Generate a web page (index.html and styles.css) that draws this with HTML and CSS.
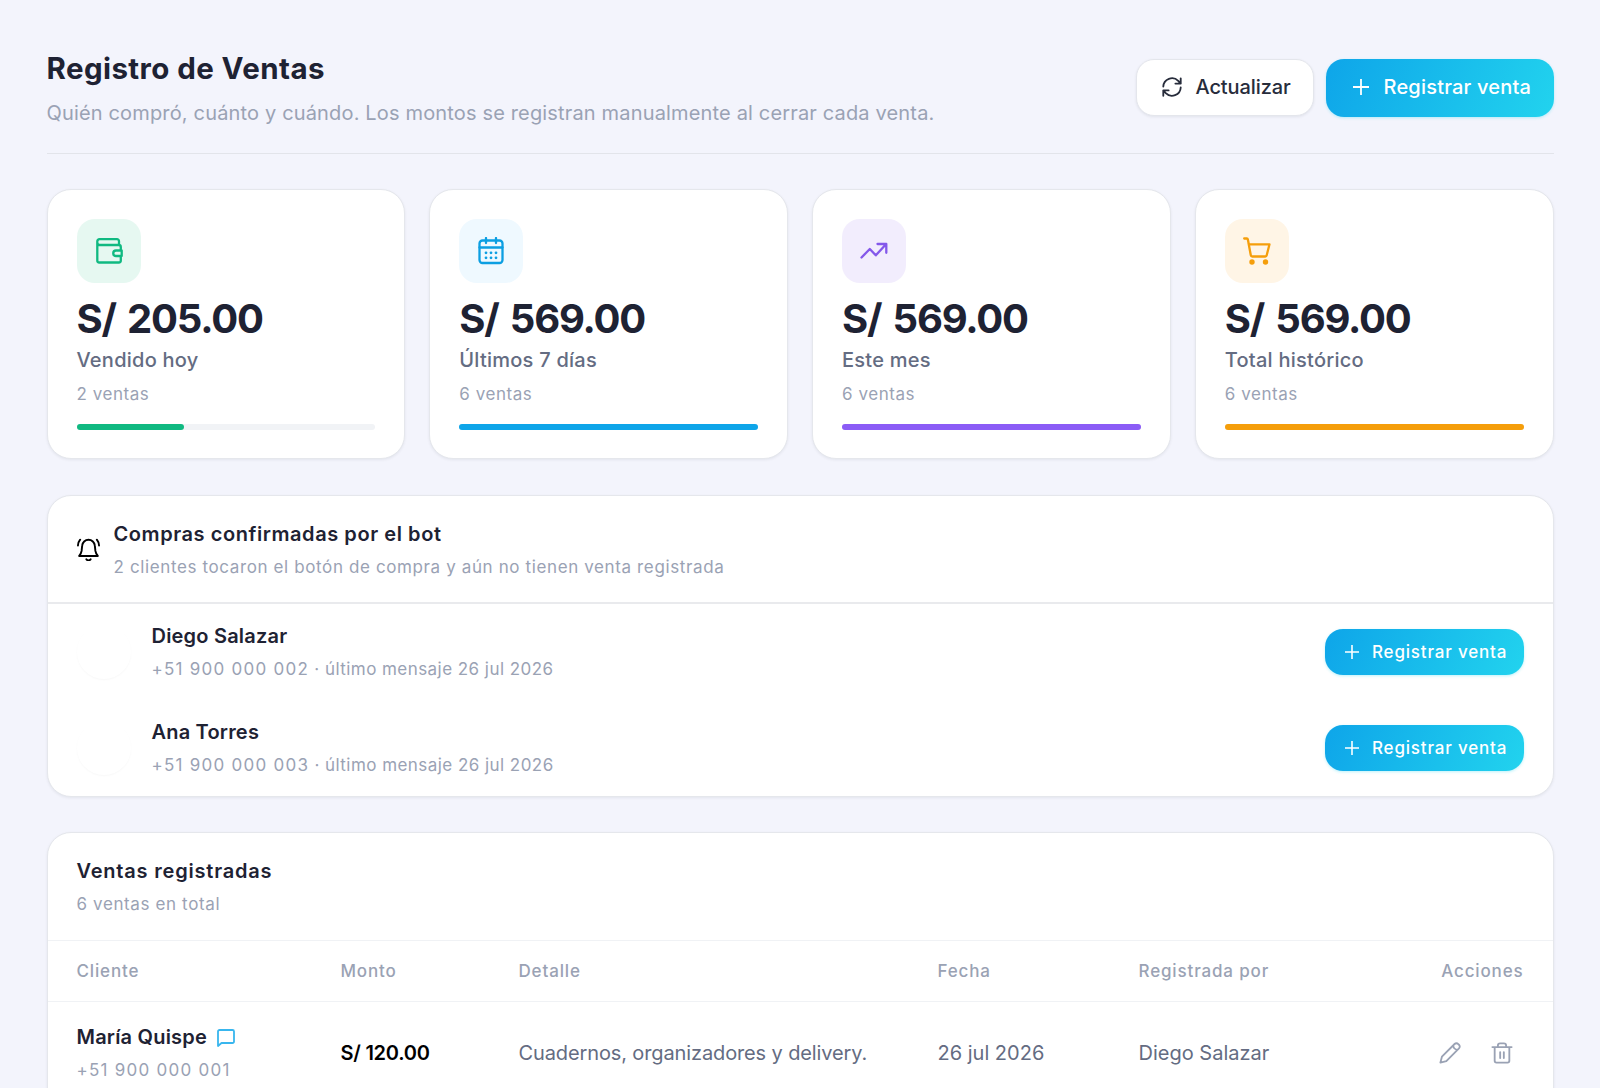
FILE: index.html
```html
<!DOCTYPE html>
<html lang="es">
<head>
  <meta charset="UTF-8">
  <title>Registro de Ventas</title>
  <link rel="stylesheet" href="styles.css">
</head>
<body>
  <main class="page">
    <header class="page-header">
      <div>
        <h1 class="page-title">Registro de Ventas</h1>
        <p class="page-subtitle">Quién compró, cuánto y cuándo. Los montos se registran manualmente al cerrar cada venta.</p>
      </div>
      <div class="page-actions">
        <button class="btn btn-light">
          <svg class="icon-refresh" viewBox="0 0 24 24"><path d="M21.5 2.5v5.8h-5.8M2.5 21.5v-5.8h5.8M2.5 11.5A9.5 9.5 0 0 1 18.8 5.3l2.7 3M21.5 12.5A9.5 9.5 0 0 1 5.2 18.7l-2.7-3"/></svg>
          <span>Actualizar</span>
        </button>
        <button class="btn btn-primary">
          <svg class="icon-plus" viewBox="0 0 16 16"><path d="M8 0v16M0 8h16"/></svg>
          <span>Registrar venta</span>
        </button>
      </div>
    </header>

    <section class="stats">
      <article class="card stat green">
        <div class="stat-icon">
          <svg viewBox="0 0 28 28"><path d="M24 8V4.2a2 2 0 0 0-2-2H4.5a2.2 2.2 0 0 0-2.2 2.3v19a2 2 0 0 0 2 2h19.500a2 2 0 0 0 2-2v-4M2.300 5.500C2.300 7.200 3.300 8 4.800 8h19a2 2 0 0 1 2 2v3M21 13.500h5.700v5.500H21a2.750 2.750 0 0 1 0-5.500z"/></svg>
        </div>
        <div class="stat-value">S/ 205.00</div>
        <div class="stat-label">Vendido hoy</div>
        <div class="stat-note">2 ventas</div>
        <div class="bar"><div class="bar-fill" style="width: 36%"></div></div>
      </article>
      <article class="card stat blue">
        <div class="stat-icon">
          <svg viewBox="0 0 28 28"><rect x="2.5" y="3.5" width="23" height="22.5" rx="3"/><path d="M2.5 10.500h23M9 1v5M19 1v5"/><path class="dots" d="M9 15.800h.01M14 15.800h.01M19 15.800h.01M9 20.800h.01M14 20.800h.01M19 20.800h.01"/></svg>
        </div>
        <div class="stat-value">S/ 569.00</div>
        <div class="stat-label">Últimos 7 días</div>
        <div class="stat-note">6 ventas</div>
        <div class="bar"><div class="bar-fill" style="width: 100%"></div></div>
      </article>
      <article class="card stat purple">
        <div class="stat-icon">
          <svg viewBox="0 0 28 28"><path d="M1.500 20.500l8.300-8.500 6 6.300L26 7.300M17.500 7h8.800v8.800"/></svg>
        </div>
        <div class="stat-value">S/ 569.00</div>
        <div class="stat-label">Este mes</div>
        <div class="stat-note">6 ventas</div>
        <div class="bar"><div class="bar-fill" style="width: 100%"></div></div>
      </article>
      <article class="card stat orange">
        <div class="stat-icon">
          <svg viewBox="0 0 28 28"><path d="M1.200 1.500h2.600a1 1 0 0 1 1 .8L5.800 7.300h20.700l-2.800 11a1.500 1.500 0 0 1-1.500 1.200H9.300a1.500 1.500 0 0 1-1.500-1.200L5.500 6"/><circle class="wheel" cx="9" cy="25" r="2.700"/><circle class="wheel" cx="22.500" cy="25" r="2.700"/></svg>
        </div>
        <div class="stat-value">S/ 569.00</div>
        <div class="stat-label">Total histórico</div>
        <div class="stat-note">6 ventas</div>
        <div class="bar"><div class="bar-fill" style="width: 100%"></div></div>
      </article>
    </section>

    <section class="card pending">
      <div class="card-header">
        <svg class="icon-bell" viewBox="0 0 24 24"><path d="M2.300 18.700h19.400c-1.500-1.800-2.200-3-2.500-5.200L18.600 8A6.600 6.600 0 0 0 12 1.800 6.600 6.600 0 0 0 5.400 8l-.6 5.500c-.3 2.200-1 3.400-2.500 5.200zM9.800 22.300a2.800 2.800 0 0 0 4.400 0M3.300 1.800A10 10 0 0 0 1 7.800M20.700 1.800A10 10 0 0 1 23 7.800"/></svg>
        <div>
          <h2 class="card-title title-pending">Compras confirmadas por el bot</h2>
          <p class="card-sub">2 clientes tocaron el botón de compra y aún no tienen venta registrada</p>
        </div>
      </div>
      <div class="pending-row">
        <div class="avatar"></div>
        <div class="pending-info">
          <div class="name">Diego Salazar</div>
          <div class="contact"><span class="phone">+51 900 000 002</span> · último mensaje 26 jul 2026</div>
        </div>
        <button class="btn btn-primary btn-small">
          <svg class="icon-plus" viewBox="0 0 16 16"><path d="M8 0v16M0 8h16"/></svg>
          <span>Registrar venta</span>
        </button>
      </div>
      <div class="pending-row">
        <div class="avatar"></div>
        <div class="pending-info">
          <div class="name">Ana Torres</div>
          <div class="contact"><span class="phone">+51 900 000 003</span> · último mensaje 26 jul 2026</div>
        </div>
        <button class="btn btn-primary btn-small">
          <svg class="icon-plus" viewBox="0 0 16 16"><path d="M8 0v16M0 8h16"/></svg>
          <span>Registrar venta</span>
        </button>
      </div>
    </section>

    <section class="card sales">
      <div class="card-header">
        <div>
          <h2 class="card-title">Ventas registradas</h2>
          <p class="card-sub">6 ventas en total</p>
        </div>
      </div>
      <div class="table-row table-head">
        <div>Cliente</div>
        <div>Monto</div>
        <div>Detalle</div>
        <div>Fecha</div>
        <div>Registrada por</div>
        <div class="col-actions">Acciones</div>
      </div>
      <div class="table-row">
        <div>
          <div class="name client">
            <span>María Quispe</span>
            <svg class="icon-chat" viewBox="0 0 18 18"><path d="M2.500 1h13A1.500 1.500 0 0 1 17 2.500v10a1.500 1.500 0 0 1-1.500 1.500H4.500L1 17V2.500A1.500 1.500 0 0 1 2.500 1z"/></svg>
          </div>
          <div class="contact"><span class="phone">+51 900 000 001</span></div>
        </div>
        <div class="amount">S/ 120.00</div>
        <div class="detail">Cuadernos, organizadores y delivery.</div>
        <div>26 jul 2026</div>
        <div>Diego Salazar</div>
        <div class="row-actions">
          <svg viewBox="0 0 24 24"><path d="M1.500 22.500l1.700-6.500L17 2.200a2.800 2.800 0 0 1 4 0l.8.800a2.800 2.800 0 0 1 0 4L8 20.800zM15.500 3.800c.3 2.800 1.900 4.400 4.700 4.700"/></svg>
          <svg viewBox="0 0 24 24"><path d="M1.500 5.500h21M4 5.500v15a2 2 0 0 0 2 2h12a2 2 0 0 0 2-2v-15M7.500 5.500V4A2.500 2.500 0 0 1 10 1.500h4A2.500 2.500 0 0 1 16.500 4v1.500M10 11v6.500M14 11v6.500"/></svg>
        </div>
      </div>
    </section>
  </main>
</body>
</html>
```

FILE: styles.css
```css
* {
  box-sizing: border-box;
}

body {
  margin: 0;
  height: 1088px;
  overflow: hidden;
  background: #f3f4fc;
  color: #1e2233;
  font-family: Inter, "Liberation Sans", sans-serif;
  font-size: 20px;
}

h1, h2, p {
  margin: 0;
}

svg {
  display: block;
  flex: none;
  fill: none;
  stroke: currentColor;
  stroke-linecap: round;
  stroke-linejoin: round;
}

.page {
  padding: 48px 46.5px 0;
}

/* header */
.page-header {
  display: flex;
  align-items: center;
  justify-content: space-between;
  padding-bottom: 24px;
  border-bottom: 1px solid #e2e4ea;
}

.page-title {
  font-size: 29.5px;
  line-height: 40px;
  font-weight: 700;
  letter-spacing: 0.42px;
}

.page-subtitle {
  margin-top: 9px;
  line-height: 32px;
  letter-spacing: 0.16px;
  color: #9aa2b4;
}

.page-actions {
  display: flex;
  align-items: center;
  gap: 12px;
  margin-bottom: 2px;
}

.btn {
  display: flex;
  align-items: center;
  height: 58px;
  padding: 0 24px 2px;
  border: 0;
  border-radius: 18px;
  font-family: inherit;
  font-size: 20px;
  font-weight: 500;
  white-space: nowrap;
}

.btn-light {
  width: 178px;
  height: 57px;
  gap: 13px;
  border: 1px solid #e4e6ec;
  background: #fff;
  color: #272c3b;
  letter-spacing: -0.1px;
  box-shadow: 0 1px 3px rgba(15, 23, 42, 0.08);
}

.btn-primary {
  width: 228px;
  gap: 15px;
  padding: 0 27px 2px;
  background: linear-gradient(115deg, #0ea5e9, #22d3ee);
  color: #fff;
  letter-spacing: 0.2px;
  box-shadow: 0 1px 3px rgba(34, 211, 238, 0.3);
}

.btn-small {
  width: 199px;
  height: 46px;
  gap: 13px;
  padding: 0 20px;
  font-size: 17px;
  letter-spacing: 0.82px;
}

.icon-refresh {
  width: 22px;
  height: 22px;
  stroke-width: 2;
}

.icon-plus {
  width: 16px;
  height: 16px;
  stroke-width: 1.8;
}

.btn-small .icon-plus {
  width: 14px;
  height: 14px;
}

/* cards */
.card {
  border: 1px solid #e5e7ec;
  border-radius: 24px;
  background: #fff;
  box-shadow: 0 1px 3px rgba(15, 23, 42, 0.07);
}

.stats {
  display: grid;
  grid-template-columns: repeat(4, 1fr);
  gap: 24px;
  margin-top: 35px;
}

.stat {
  height: 270px;
  padding: 29px;
}

.stat-icon {
  display: flex;
  align-items: center;
  justify-content: center;
  width: 64px;
  height: 64px;
  border-radius: 18px;
}

.stat-icon svg {
  width: 28px;
  height: 28px;
  stroke-width: 2.3;
}

.stat-icon .dots {
  stroke-width: 2.8;
}

.stat-icon .wheel {
  fill: currentColor;
  stroke: none;
}

.stat-value {
  margin-top: 12px;
  font-size: 40px;
  line-height: 48px;
  font-weight: 700;
  letter-spacing: -1.2px;
  word-spacing: 3px;
  white-space: nowrap;
}

.stat-label {
  margin-top: 2px;
  line-height: 31px;
  font-weight: 500;
  letter-spacing: 0.25px;
  color: #646c82;
}

.stat-note {
  margin-top: 5px;
  font-size: 17px;
  line-height: 26px;
  letter-spacing: 0.55px;
  color: #9aa2b4;
}

.bar {
  height: 6px;
  margin-top: 17px;
  border-radius: 3px;
  background: #f1f3f6;
}

.bar-fill {
  height: 6px;
  border-radius: 3px;
}

.green .stat-icon {
  background: #e6f8f1;
  color: #10b981;
}

.green .bar-fill {
  background: #10b981;
}

.blue .stat-icon {
  background: #eff9ff;
  color: #0c9fe2;
}

.blue .bar-fill {
  background: #0ea5e9;
}

.purple .stat-icon {
  background: #f2edfd;
  color: #8458ea;
}

.purple .bar-fill {
  background: #8b5cf6;
}

.orange .stat-icon {
  background: #fff5e6;
  color: #f59e0b;
}

.orange .bar-fill {
  background: #f59e0b;
}

.card-header {
  display: flex;
  align-items: center;
  gap: 14px;
  padding: 23px 29px;
}

.card-title {
  font-size: 20px;
  line-height: 30px;
  font-weight: 600;
  letter-spacing: 0.8px;
}

.title-pending {
  letter-spacing: 0.57px;
}

.card-sub {
  margin-top: 5px;
  font-size: 17px;
  line-height: 26px;
  letter-spacing: 0.62px;
  color: #9aa2b4;
}

.icon-bell {
  width: 23px;
  height: 23px;
  color: #000;
  stroke-width: 2;
}

/* confirmed purchases */
.pending {
  margin-top: 36px;
}

.pending .card-header {
  padding-bottom: 22px;
  border-bottom: 2px solid #e9eaed;
}

.pending-row {
  display: flex;
  align-items: center;
  height: 96px;
  padding: 0 28.5px 1px 29px;
}

.avatar {
  width: 54px;
  height: 54px;
  margin-right: 21px;
  border-radius: 50%;
  box-shadow: 0 1px 2px rgba(15, 23, 42, 0.03);
}

.pending-info {
  flex: 1;
}

.name {
  line-height: 30px;
  font-weight: 600;
  letter-spacing: 0.2px;
  color: #1e2233;
}

.contact {
  margin-top: 5px;
  font-size: 17px;
  line-height: 26px;
  letter-spacing: 0.45px;
  color: #9aa2b4;
}

.phone {
  letter-spacing: 1.25px;
}

/* sales table */
.sales {
  margin-top: 35px;
  padding-bottom: 60px;
}

.table-row {
  display: grid;
  grid-template-columns: 264px 178px 419px 201px 200px 1fr;
  align-items: center;
  padding: 20px 29px;
  border-top: 1px solid #f0f2f5;
  color: #646c82;
}

.table-head {
  padding: 17px 29px;
  font-size: 17px;
  line-height: 26px;
  font-weight: 500;
  letter-spacing: 0.85px;
  color: #9aa2b4;
}

.col-actions {
  text-align: right;
}

.client {
  display: flex;
  align-items: center;
  gap: 10px;
}

.icon-chat {
  width: 18px;
  height: 18px;
  margin-top: 2px;
  color: #38b6ee;
  stroke-width: 1.8;
}

.amount {
  font-weight: 600;
  letter-spacing: -0.25px;
  color: #000;
}

.detail {
  letter-spacing: -0.12px;
}

.row-actions {
  display: flex;
  justify-content: flex-end;
  gap: 30px;
  padding-right: 11px;
  color: #9aa2b4;
}

.row-actions svg {
  width: 22px;
  height: 22px;
  stroke-width: 2;
}
```
